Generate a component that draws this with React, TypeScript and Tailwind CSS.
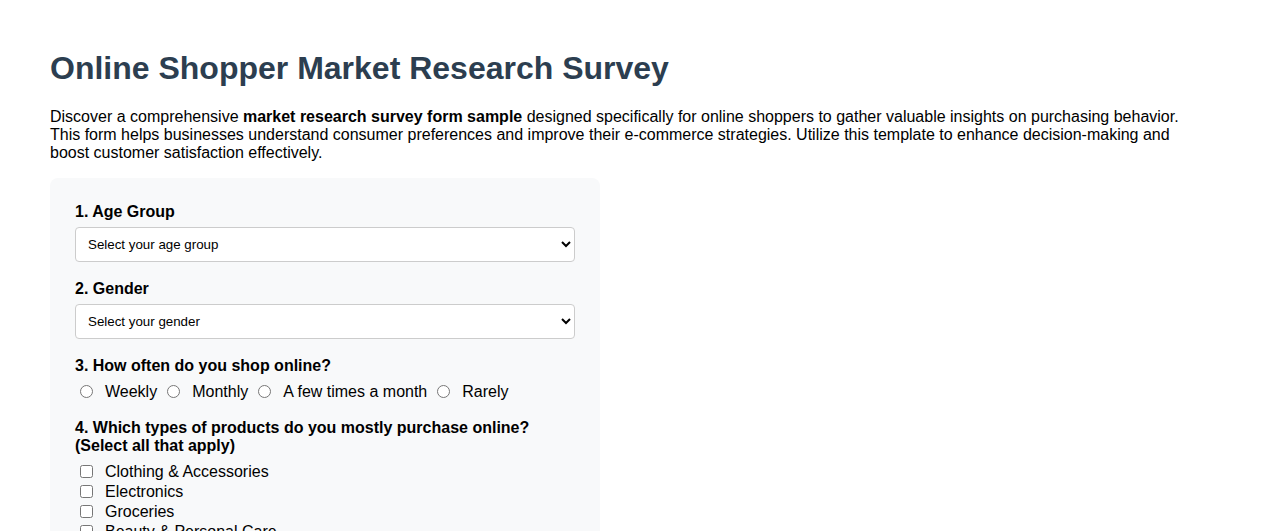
const AGE_GROUPS = ['Under 18', '18-24', '25-34', '35-44', '45-54', '55+']
const GENDERS = ['Male', 'Female', 'Non-binary', 'Prefer not to say']
const FREQUENCIES = ['Weekly', 'Monthly', 'A few times a month', 'Rarely']
const PRODUCTS = [
  'Clothing & Accessories',
  'Electronics',
  'Groceries',
  'Beauty & Personal Care',
  'Home & Kitchen',
  'Books & Media',
]

const labelCls = 'block text-[16px] leading-[18px] font-bold text-black'
const selectCls =
  'block w-full h-[35px] px-[8px] text-[13.33px] text-black bg-white border border-[#ccc] rounded-[4px] appearance-auto'

export default function App() {
  return (
    <div className="min-h-screen bg-white px-[50px] pt-[50px] font-['Liberation_Sans',Arial,sans-serif] text-black">
      <h1 className="text-[32px] leading-[37px] font-bold text-[#2c3e50]">
        Online Shopper Market Research Survey
      </h1>
      <p className="mt-[21px] max-w-[1146px] text-[16px] leading-[18px]">
        Discover a comprehensive <strong>market research survey form sample</strong> designed specifically for online
        shoppers to gather valuable insights on purchasing behavior. This form helps businesses understand consumer
        preferences and improve their e-commerce strategies. Utilize this template to enhance decision-making and boost
        customer satisfaction effectively.
      </p>

      <form className="mt-[16px] w-[550px] bg-[#f8f9fa] rounded-[8px] p-[25px]">
        <div className="mb-[18px]">
          <label className={labelCls + ' mb-[6px]'}>1. Age Group</label>
          <select className={selectCls} defaultValue="">
            <option value="">Select your age group</option>
            {AGE_GROUPS.map((a) => (
              <option key={a}>{a}</option>
            ))}
          </select>
        </div>

        <div className="mb-[18px]">
          <label className={labelCls + ' mb-[6px]'}>2. Gender</label>
          <select className={selectCls} defaultValue="">
            <option value="">Select your gender</option>
            {GENDERS.map((g) => (
              <option key={g}>{g}</option>
            ))}
          </select>
        </div>

        <div className="mb-[18px]">
          <label className={labelCls + ' mb-[8px]'}>3. How often do you shop online?</label>
          <div className="flex items-center text-[16px] leading-[18px]">
            {FREQUENCIES.map((f) => (
              <label key={f} className="flex items-center mr-[5px]">
                <input type="radio" name="frequency" className="w-[13px] h-[13px] ml-[5px] mr-[12px] mt-[-1px]" />
                {f}
              </label>
            ))}
          </div>
        </div>

        <div>
          <label className={labelCls + ' mb-[8px]'}>
            4. Which types of products do you mostly purchase online?
            <br />
            (Select all that apply)
          </label>
          <div className="flex flex-col gap-[2px] text-[16px] leading-[18px]">
            {PRODUCTS.map((p) => (
              <label key={p} className="flex items-center">
                <input type="checkbox" className="w-[13px] h-[13px] ml-[5px] mr-[12px] mt-[-1px]" />
                {p}
              </label>
            ))}
          </div>
        </div>
      </form>
    </div>
  )
}
